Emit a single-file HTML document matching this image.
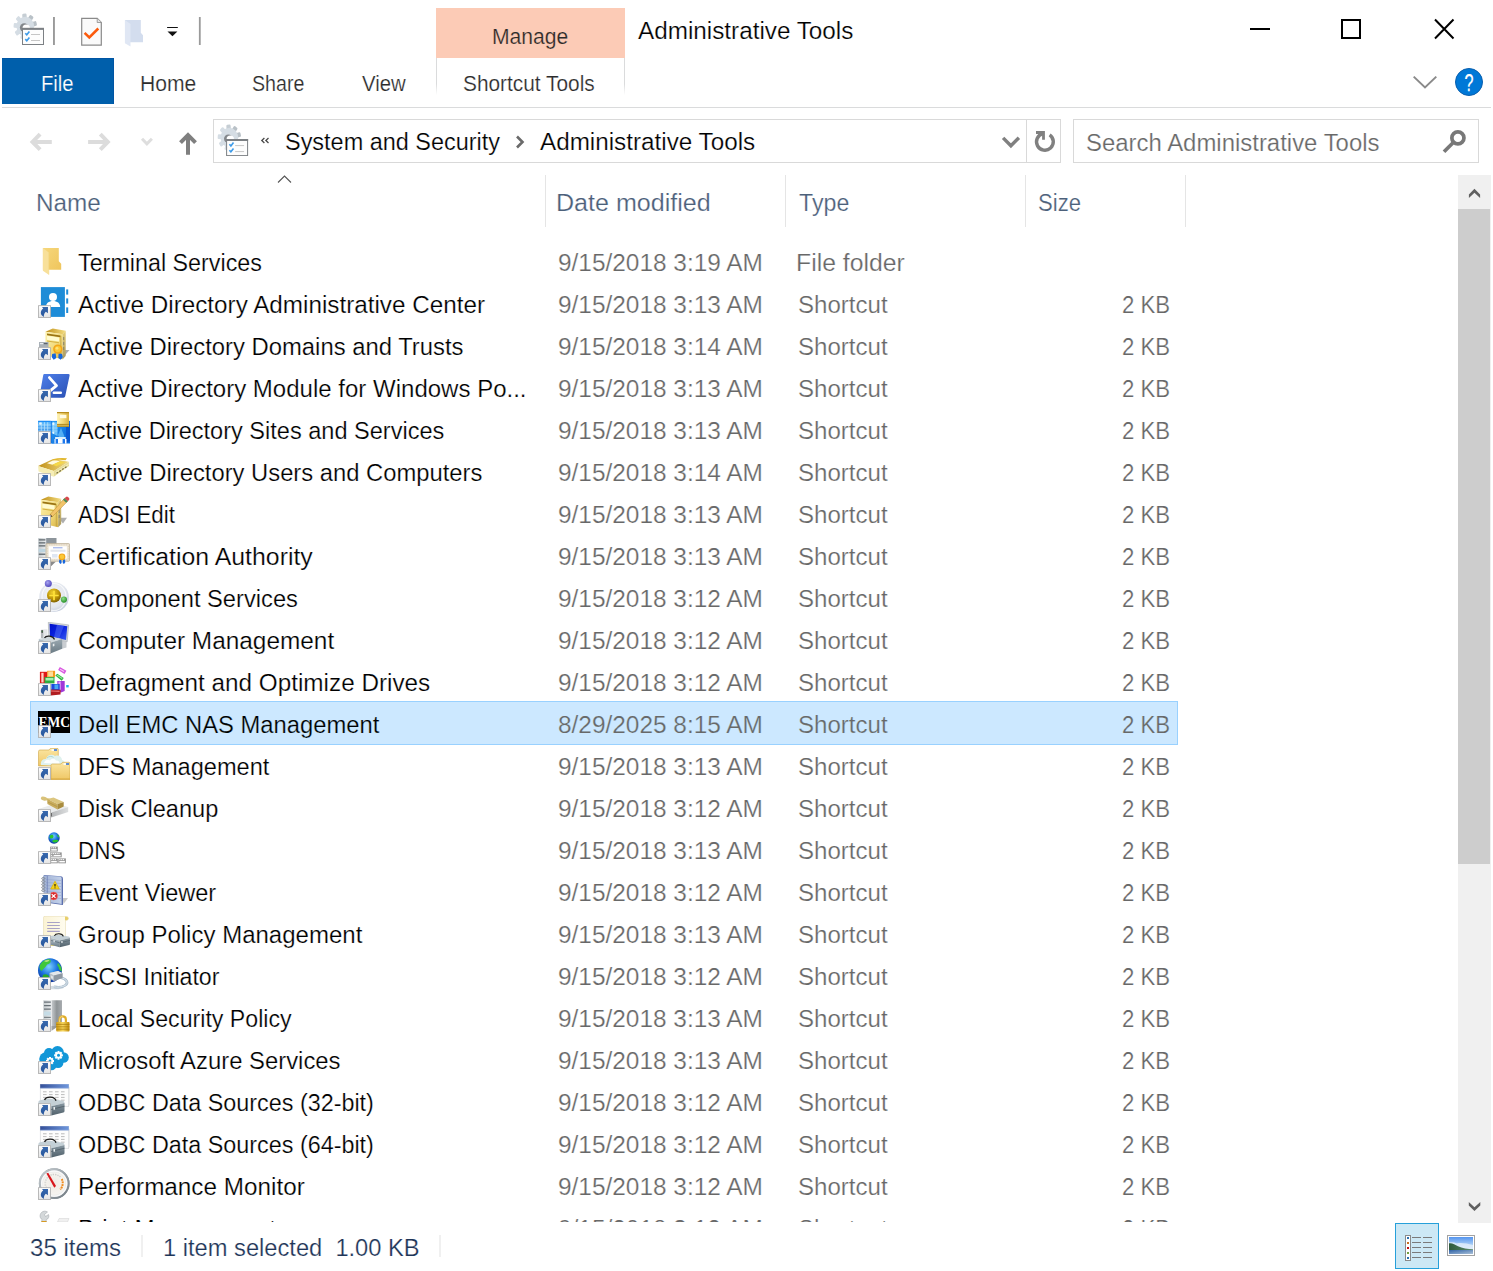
<!DOCTYPE html>
<html><head><meta charset="utf-8"><title>Administrative Tools</title>
<style>
html,body{margin:0;padding:0;background:#fff;}
body{width:1493px;height:1271px;overflow:hidden;font-family:"Liberation Sans",sans-serif;}
#win{position:relative;width:1493px;height:1271px;overflow:hidden;background:#fff;}
.a{position:absolute;}
.t{-webkit-text-stroke:0.22px #fff;position:absolute;line-height:30px;white-space:pre;transform-origin:0 0;display:inline-block;}
#list{position:absolute;left:0;top:229px;width:1458px;height:993px;overflow:hidden;}
#list .t,#list .ic,#list .sel{margin-top:-229px;}
.ic{position:absolute;left:38px;width:32px;height:32px;}
.ic svg{position:absolute;left:0;top:0;}
.sel{position:absolute;left:30px;width:1146px;height:42px;background:#cce8ff;border:1px solid #99d1ff;}

</style></head>
<body>
<div id="win">
<svg width="0" height="0" style="position:absolute"><defs>
<linearGradient id="gOv" x1="0" y1="0" x2="0" y2="1"><stop offset="0" stop-color="#fff"/><stop offset="1" stop-color="#e4e4e4"/></linearGradient>
<linearGradient id="gArr" x1="0" y1="0" x2="0" y2="1"><stop offset="0" stop-color="#3768ad"/><stop offset="1" stop-color="#27569c"/></linearGradient>
<linearGradient id="gFoB" x1="0" y1="0" x2="1" y2="1"><stop offset="0" stop-color="#f6d77c"/><stop offset="1" stop-color="#efc55c"/></linearGradient>
<linearGradient id="gGoldF" x1="0" y1="0" x2="1" y2="1"><stop offset="0" stop-color="#fdf2b0"/><stop offset="0.6" stop-color="#f0d878"/><stop offset="1" stop-color="#d8b548"/></linearGradient>
<linearGradient id="gGoldT" x1="0" y1="0" x2="1" y2="0"><stop offset="0" stop-color="#c09018"/><stop offset="1" stop-color="#f3dc80"/></linearGradient>
<linearGradient id="gGoldS" x1="0" y1="0" x2="0" y2="1"><stop offset="0" stop-color="#e8d078"/><stop offset="1" stop-color="#a89860"/></linearGradient>
<linearGradient id="gPS" x1="0" y1="0" x2="1" y2="1"><stop offset="0" stop-color="#4f80ea"/><stop offset="1" stop-color="#2a50b4"/></linearGradient>
<linearGradient id="gBlueB" x1="0" y1="0" x2="0" y2="1"><stop offset="0" stop-color="#6cc4ff"/><stop offset="1" stop-color="#0a62d0"/></linearGradient>
<linearGradient id="gBlueB2" x1="0" y1="0" x2="1" y2="1"><stop offset="0" stop-color="#2a9cf4"/><stop offset="1" stop-color="#0868d8"/></linearGradient>
<radialGradient id="gSph" cx="0.45" cy="0.4" r="0.6"><stop offset="0" stop-color="#f8f9fc"/><stop offset="0.75" stop-color="#e2e6ee"/><stop offset="1" stop-color="#c6cede"/></radialGradient>
<radialGradient id="gGoldBall" cx="0.4" cy="0.3" r="0.75"><stop offset="0" stop-color="#f0d030"/><stop offset="0.6" stop-color="#b89008"/><stop offset="1" stop-color="#7a5c00"/></radialGradient>
<radialGradient id="gPurp" cx="0.4" cy="0.35" r="0.7"><stop offset="0" stop-color="#a8a4f0"/><stop offset="1" stop-color="#4a40b8"/></radialGradient>
<radialGradient id="gGreen" cx="0.4" cy="0.35" r="0.7"><stop offset="0" stop-color="#8fe08a"/><stop offset="1" stop-color="#1f8a20"/></radialGradient>
<linearGradient id="gScreen" x1="0" y1="0" x2="1" y2="1"><stop offset="0" stop-color="#0010c8"/><stop offset="0.5" stop-color="#0a22e0"/><stop offset="1" stop-color="#3a5cf0"/></linearGradient>
<linearGradient id="gSteel" x1="0" y1="0" x2="0" y2="1"><stop offset="0" stop-color="#b8c6ce"/><stop offset="1" stop-color="#6c7c86"/></linearGradient>
<linearGradient id="gSteelD" x1="0" y1="0" x2="0" y2="1"><stop offset="0" stop-color="#8898a2"/><stop offset="1" stop-color="#50606a"/></linearGradient>
<linearGradient id="gSrvS" x1="0" y1="0" x2="1" y2="0"><stop offset="0" stop-color="#c8cccf"/><stop offset="0.5" stop-color="#8f9497"/><stop offset="1" stop-color="#a8acaf"/></linearGradient>
<linearGradient id="gSrvF" x1="0" y1="0" x2="1" y2="0"><stop offset="0" stop-color="#c4cacd"/><stop offset="1" stop-color="#e9ecee"/></linearGradient>
<linearGradient id="gLock" x1="0" y1="0" x2="1" y2="0"><stop offset="0" stop-color="#d09a10"/><stop offset="0.5" stop-color="#f8d860"/><stop offset="1" stop-color="#c08a08"/></linearGradient>
<linearGradient id="gTabH" x1="0" y1="0" x2="1" y2="0"><stop offset="0" stop-color="#34509a"/><stop offset="1" stop-color="#6f97dc"/></linearGradient>
<radialGradient id="gGlobe" cx="0.45" cy="0.35" r="0.7"><stop offset="0" stop-color="#7fd4ff"/><stop offset="0.5" stop-color="#1c74e0"/><stop offset="1" stop-color="#0a2a90"/></radialGradient>
<radialGradient id="gGauge" cx="0.5" cy="0.5" r="0.5"><stop offset="0" stop-color="#efe9e2"/><stop offset="0.7" stop-color="#f6f4f0"/><stop offset="0.86" stop-color="#d9dcde"/><stop offset="1" stop-color="#8f979c"/></radialGradient>
<linearGradient id="gNote" x1="0" y1="0" x2="1" y2="0"><stop offset="0" stop-color="#9fb1d4"/><stop offset="1" stop-color="#c4d2ea"/></linearGradient>
<linearGradient id="gScroll" x1="0" y1="0" x2="1" y2="0"><stop offset="0" stop-color="#fbf3d4"/><stop offset="1" stop-color="#fffdf2"/></linearGradient>
<linearGradient id="gDrive" x1="0" y1="0" x2="1" y2="0"><stop offset="0" stop-color="#b4b6b8"/><stop offset="1" stop-color="#dcdedf"/></linearGradient>
<linearGradient id="gFold2" x1="0" y1="0" x2="0" y2="1"><stop offset="0" stop-color="#fbe6a2"/><stop offset="1" stop-color="#efc766"/></linearGradient>
<linearGradient id="gRim" x1="0" y1="0" x2="1" y2="1"><stop offset="0" stop-color="#c9cfd3"/><stop offset="0.5" stop-color="#9aa3a9"/><stop offset="1" stop-color="#727b82"/></linearGradient>
<linearGradient id="gGoldBox" x1="0" y1="0" x2="1" y2="0"><stop offset="0" stop-color="#fff4b8"/><stop offset="0.5" stop-color="#f2d878"/><stop offset="1" stop-color="#d8b040"/></linearGradient>
<linearGradient id="gSteelM" x1="0" y1="0" x2="0" y2="1"><stop offset="0" stop-color="#9aa8b0"/><stop offset="1" stop-color="#6c7c86"/></linearGradient>
</defs></svg>
<!-- title bar -->
<div class="a" id="qat" style="left:0;top:0;width:430px;height:58px"><svg width="430" height="58" viewBox="0 0 430 58"><g transform="translate(14,14)"><g transform="translate(11.300,12.500) scale(0.900,1) translate(-10.500,-12.500)"><rect x="8.100" y="-0.500" width="4.800" height="8" rx="1.200" fill="#c6ced4" transform="rotate(-5 10.500 12.500)"/><rect x="8.100" y="-0.500" width="4.800" height="8" rx="1.200" fill="#b9c1c7" transform="rotate(35 10.500 12.500)"/><rect x="8.100" y="-0.500" width="4.800" height="8" rx="1.200" fill="#b9c1c7" transform="rotate(75 10.500 12.500)"/><rect x="8.100" y="-0.500" width="4.800" height="8" rx="1.200" fill="#d5dde4" transform="rotate(115 10.500 12.500)"/><rect x="8.100" y="-0.500" width="4.800" height="8" rx="1.200" fill="#d5dde4" transform="rotate(155 10.500 12.500)"/><rect x="8.100" y="-0.500" width="4.800" height="8" rx="1.200" fill="#d5dde4" transform="rotate(195 10.500 12.500)"/><rect x="8.100" y="-0.500" width="4.800" height="8" rx="1.200" fill="#d5dde4" transform="rotate(235 10.500 12.500)"/><rect x="8.100" y="-0.500" width="4.800" height="8" rx="1.200" fill="#d5dde4" transform="rotate(275 10.500 12.500)"/><rect x="8.100" y="-0.500" width="4.800" height="8" rx="1.200" fill="#d5dde4" transform="rotate(315 10.500 12.500)"/><circle cx="10.500" cy="12.500" r="9.800" fill="#d5dde4"/></g><circle cx="10.200" cy="13.600" r="4.300" fill="#83878b"/><circle cx="12.200" cy="14.200" r="3.700" fill="#fff"/><rect x="8.500" y="14.400" width="21" height="16.100" fill="#fdfdfd" stroke="#7c8084" stroke-width="1"/><rect x="8" y="13.900" width="22" height="2" fill="#7c8084"/><path d="M11.300 19.200l1.500 1.600l2.600-3.300M11.300 25.100l1.500 1.600l2.600-3.300" stroke="#3d9be9" stroke-width="1.600" fill="none"/><path d="M17 20.500H26M17 26.500H26" stroke="#c6c6c6" stroke-width="1"/></g><rect x="53" y="17" width="1.900" height="28" fill="#9a9a9a"/><path d="M81.700 18.400H97.200L101.300 22.500V45.200H81.700Z" fill="#fafafa" stroke="#8a8a8a" stroke-width="1.200"/><path d="M97.200 18.400V22.500H101.300" fill="#e6e6e6" stroke="#8a8a8a" stroke-width="0.800"/><path d="M84.600 32.800L89.300 37.500L98.300 28.500" stroke="#fb5a0c" stroke-width="2.500" fill="none"/><path d="M125 20H140.800V32.800L143 35.200V42.200H125Z" fill="#d3ddee"/><path d="M124.900 20L130.500 23.900V46.400L124.900 43.200Z" fill="#e0e7f4"/><rect x="167.100" y="27" width="10.700" height="1" fill="#111"/><path d="M167.500 31.400H177.400L172.450 36.200Z" fill="#111"/><rect x="198.900" y="17" width="1.800" height="28" fill="#9a9a9a"/></svg></div>
<div class="a" style="left:436px;top:8px;width:189px;height:50px;background:#fccbb6"></div>
<!-- window controls -->
<svg class="a" style="left:1240px;top:0" width="253" height="58" viewBox="0 0 253 58">
 <path d="M10 29H30" stroke="#000" stroke-width="2" fill="none"/>
 <rect x="102" y="20" width="18" height="18" stroke="#000" stroke-width="2" fill="none"/>
 <path d="M195 19.5L213.5 38.5M213.5 19.5L195 38.5" stroke="#000" stroke-width="2" fill="none"/>
</svg>
<!-- ribbon tabs -->
<div class="a" style="left:2px;top:58px;width:111px;height:45px;background:#005fab;border-top:1px solid #0055a4;border-right:1px solid #0055a4"></div>
<div class="a" style="left:436px;top:58px;width:1px;height:37px;background:linear-gradient(#dadbdc 70%,#fff)"></div>
<div class="a" style="left:624px;top:58px;width:1px;height:37px;background:linear-gradient(#dadbdc 70%,#fff)"></div>
<div class="a" style="left:2px;top:107px;width:1489px;height:1px;background:#dadbdc"></div>
<svg class="a" style="left:1408px;top:64px" width="80" height="36" viewBox="0 0 80 36">
 <path d="M5.700 12.600L17 23.400L28.300 12.600" stroke="#8a8a8a" stroke-width="2" fill="none"/>
 <defs><linearGradient id="hg" x1="0" y1="0" x2="0" y2="1"><stop offset="0" stop-color="#1683e0"/><stop offset="1" stop-color="#0567c8"/></linearGradient></defs>
 <circle cx="61" cy="18" r="13.500" fill="#0078d7" stroke="#0a5fae" stroke-width="1"/>
 <text x="61" y="26.600" font-family="Liberation Sans, sans-serif" font-size="23" fill="#fff" stroke="#fff" stroke-width="0.250" text-anchor="middle" textLength="9" lengthAdjust="spacingAndGlyphs">?</text>
</svg>
<!-- nav bar -->
<svg class="a" style="left:20px;top:120px" width="190" height="44" viewBox="0 0 190 44">
 <g stroke="#dcdcdc" stroke-width="4" fill="none">
  <path d="M31.800 21.900H13.500M20.100 14.200L12.500 21.900L20.100 29.600"/>
  <path d="M68.100 21.900H86.800M80.300 14.200L87.800 21.900L80.300 29.600"/>
 </g>
 <path d="M122 18.800L126.900 23.800L131.900 18.800" stroke="#dedede" stroke-width="3" fill="none"/>
 <path d="M168 34.700V16M160.500 22.700L168 15.200L175.500 22.700" stroke="#7f7f7f" stroke-width="4" fill="none"/>
</svg>
<div class="a" style="left:213px;top:119px;width:846px;height:42px;border:1px solid #d9d9d9"></div>
<div class="a" style="left:1026px;top:120px;width:1px;height:42px;background:#d9d9d9"></div>
<svg class="a" style="left:996px;top:126px" width="64" height="32" viewBox="0 0 64 32">
 <path d="M7.100 11.900L14.900 19.800L22.900 11.800" stroke="#808080" stroke-width="3.400" fill="none"/>
 <path d="M53.620 8.850A8.400 8.400 0 1 1 46.730 7.690" stroke="#808080" stroke-width="3.400" fill="none"/>
 <path d="M40 5H48.900V13.700H46.100V7.900H40Z" fill="#808080"/>
</svg>
<div class="a" style="left:1073px;top:119px;width:404px;height:42px;border:1px solid #d9d9d9"></div>
<svg class="a" style="left:1440px;top:128px" width="30" height="28" viewBox="0 0 30 28">
 <circle cx="17.900" cy="9.900" r="6.050" stroke="#787878" stroke-width="3.700" fill="none"/>
 <path d="M13.800 14L4 23.700" stroke="#787878" stroke-width="3.700" fill="none"/>
</svg>
<div class="a" id="adricon" style="left:217px;top:124px;width:32px;height:32px"><svg width="32" height="32" viewBox="0 0 32 32"><g transform="translate(1.1,1.1)"><g transform="translate(11.300,12.500) scale(0.900,1) translate(-10.500,-12.500)"><rect x="8.100" y="-0.500" width="4.800" height="8" rx="1.200" fill="#c6ced4" transform="rotate(-5 10.500 12.500)"/><rect x="8.100" y="-0.500" width="4.800" height="8" rx="1.200" fill="#b9c1c7" transform="rotate(35 10.500 12.500)"/><rect x="8.100" y="-0.500" width="4.800" height="8" rx="1.200" fill="#b9c1c7" transform="rotate(75 10.500 12.500)"/><rect x="8.100" y="-0.500" width="4.800" height="8" rx="1.200" fill="#d5dde4" transform="rotate(115 10.500 12.500)"/><rect x="8.100" y="-0.500" width="4.800" height="8" rx="1.200" fill="#d5dde4" transform="rotate(155 10.500 12.500)"/><rect x="8.100" y="-0.500" width="4.800" height="8" rx="1.200" fill="#d5dde4" transform="rotate(195 10.500 12.500)"/><rect x="8.100" y="-0.500" width="4.800" height="8" rx="1.200" fill="#d5dde4" transform="rotate(235 10.500 12.500)"/><rect x="8.100" y="-0.500" width="4.800" height="8" rx="1.200" fill="#d5dde4" transform="rotate(275 10.500 12.500)"/><rect x="8.100" y="-0.500" width="4.800" height="8" rx="1.200" fill="#d5dde4" transform="rotate(315 10.500 12.500)"/><circle cx="10.500" cy="12.500" r="9.800" fill="#d5dde4"/></g><circle cx="10.200" cy="13.600" r="4.300" fill="#83878b"/><circle cx="12.200" cy="14.200" r="3.700" fill="#fff"/><rect x="8.500" y="14.400" width="21" height="16.100" fill="#fdfdfd" stroke="#7c8084" stroke-width="1"/><rect x="8" y="13.900" width="22" height="2" fill="#7c8084"/><path d="M11.300 19.200l1.500 1.600l2.600-3.300M11.300 25.100l1.500 1.600l2.600-3.300" stroke="#3d9be9" stroke-width="1.600" fill="none"/><path d="M17 20.500H26M17 26.500H26" stroke="#c6c6c6" stroke-width="1"/></g></svg></div>
<svg class="a" style="left:258px;top:134px" width="14" height="12" viewBox="0 0 14 12"><path d="M6.400 4.100L3.800 6.500L6.400 8.900M10.500 4.100L7.900 6.500L10.500 8.900" stroke="#4a4a4a" stroke-width="1.300" fill="none"/></svg>
<svg class="a" style="left:510px;top:132px" width="20" height="20" viewBox="0 0 20 20"><path d="M7 4.5L12.5 10L7 15.5" stroke="#6a6a6a" stroke-width="2.6" fill="none"/></svg>
<!-- column header -->
<svg class="a" style="left:276px;top:174px" width="18" height="10" viewBox="0 0 18 10"><path d="M2 8.5L8.5 2L15 8.5" stroke="#555" stroke-width="1.1" fill="none"/></svg>
<div class="a" style="left:545px;top:175px;width:1px;height:52px;background:#e5e5e5"></div>
<div class="a" style="left:785px;top:175px;width:1px;height:52px;background:#e5e5e5"></div>
<div class="a" style="left:1025px;top:175px;width:1px;height:52px;background:#e5e5e5"></div>
<div class="a" style="left:1185px;top:175px;width:1px;height:52px;background:#e5e5e5"></div>
<!-- list -->
<div id="list">
<div class="ic" style="top:244px"><svg width="32" height="32" viewBox="0 0 32 32"><path d="M4.900 4H20.800V17.300L23.200 19.700V25.800H4.900Z" fill="url(#gFoB)"/><path d="M4.900 4L10.800 8.400V30.700L4.900 26.700Z" fill="#f8e09a"/><path d="M10.800 8.400V30.700" stroke="#f3d684" stroke-width="0.6"/></svg></div>
<div class="ic" style="top:286px"><svg width="32" height="32" viewBox="0 0 32 32"><rect x="2.900" y="1.100" width="24" height="29.800" fill="#1e8cd7"/><circle cx="15" cy="11" r="4" fill="#fff"/><path d="M7.900 21C7.900 17.200 10.800 15 15 15S22.200 17.200 22.200 21Z" fill="#fff"/><rect x="28.200" y="3.400" width="2" height="5.200" fill="#1e8cd7"/><rect x="28.200" y="12.400" width="2" height="5.200" fill="#1e8cd7"/><rect x="28.200" y="21.400" width="2" height="5.600" fill="#1e8cd7"/></svg><svg width="32" height="32" viewBox="0 0 32 32"><rect x="0.55" y="19.65" width="11.9" height="11.9" fill="url(#gOv)" stroke="#b2b2b2" stroke-width="0.9"/><path d="M4 21.100L10 21L9.900 27.200L7.900 25.800C6.800 26.600 5.900 28.200 5.700 31C4.200 29.800 2.900 28.600 2.800 27C2.900 25 3.800 23.600 5.200 22.600Z" fill="url(#gArr)"/></svg></div>
<div class="ic" style="top:328px"><svg width="32" height="32" viewBox="0 0 32 32"><g transform="translate(0,0)"><path d="M24.700 22H31.500L25 29.500Z" fill="#9a9a9a" opacity="0.8"/><path d="M7.400 3.700L14.800 0.500L27.700 2.700L24.700 6.200Z" fill="url(#gGoldT)"/><path d="M7.400 3.700L24.700 6.200V31.200L7.400 27.300Z" fill="url(#gGoldF)"/><path d="M24.700 6.200L27.700 2.700V28L24.700 31.200Z" fill="url(#gGoldS)"/><path d="M9 5.600L22.500 7.600V9.200L9 7.200Z" fill="#9a7414"/><path d="M9 7.800L21 9.500V13.500L9 11.800Z" fill="#fffbd0"/><path d="M9 12.600L21 14.300V15.300L9 13.600Z" fill="#d4b040"/><path d="M22.800 8V30.500" stroke="#b89a3c" stroke-width="0.7"/><path d="M25.700 9v3M25.700 14v3M25.700 19v3" stroke="#7a7a6a" stroke-width="0.8"/></g><rect x="1" y="14" width="9.500" height="6" fill="#a9b1b8"/><rect x="2" y="15" width="3" height="1.200" fill="#e8ecef"/><rect x="6" y="15" width="3.500" height="1.200" fill="#5c646c"/><path d="M14.200 26L17.600 25.300L18.300 30L15.700 31.800L13.800 29.300Z" fill="#1766dc"/><path d="M20.600 25.300L24 26L24.800 29.300L22.700 31.800L20.300 30Z" fill="#1766dc"/><circle cx="19.800" cy="21.100" r="4.700" fill="#f3a61a"/><circle cx="19.800" cy="21.100" r="3.100" fill="#fbc938"/><circle cx="19" cy="20.300" r="1.400" fill="#ffe27a"/></svg><svg width="32" height="32" viewBox="0 0 32 32"><rect x="0.55" y="19.65" width="11.9" height="11.9" fill="url(#gOv)" stroke="#b2b2b2" stroke-width="0.9"/><path d="M4 21.100L10 21L9.900 27.200L7.900 25.800C6.800 26.600 5.900 28.200 5.700 31C4.200 29.800 2.900 28.600 2.800 27C2.900 25 3.800 23.600 5.200 22.600Z" fill="url(#gArr)"/></svg></div>
<div class="ic" style="top:370px"><svg width="32" height="32" viewBox="0 0 32 32"><path d="M6.200 4.100H30.500Q32 4.100 31.600 5.600L27.200 26.300Q26.900 27.700 25.400 27.700H2.600Q1.100 27.700 1.500 26.200L5.200 5.300Q5.500 4.100 6.200 4.100Z" fill="url(#gPS)"/><path d="M11.400 7.600L18.500 15.700L9 23.400" stroke="#fff" stroke-width="2.800" fill="none" stroke-linecap="round" stroke-linejoin="round"/><path d="M15.800 22.800H22.800" stroke="#fff" stroke-width="2.500" stroke-linecap="round"/></svg><svg width="32" height="32" viewBox="0 0 32 32"><rect x="0.55" y="19.65" width="11.9" height="11.9" fill="url(#gOv)" stroke="#b2b2b2" stroke-width="0.9"/><path d="M4 21.100L10 21L9.900 27.200L7.900 25.800C6.800 26.600 5.900 28.200 5.700 31C4.200 29.800 2.900 28.600 2.800 27C2.900 25 3.800 23.600 5.200 22.600Z" fill="url(#gArr)"/></svg></div>
<div class="ic" style="top:412px"><svg width="32" height="32" viewBox="0 0 32 32"><rect x="0.100" y="8.900" width="32" height="22.600" fill="#0f74e6"/><rect x="0.100" y="8.900" width="12.700" height="22.600" fill="url(#gBlueB)"/><rect x="0.100" y="8.900" width="12.700" height="1.300" fill="#1c8cf4"/><path d="M0.100 13H12.800M0.100 16H12.800M0.100 19H12.800M3.300 10.200V22M6.500 10.200V22M9.700 10.200V22" stroke="#d4f2ff" stroke-width="0.800" opacity="0.750"/><circle cx="2.300" cy="11.500" r="1.300" fill="#fff" opacity="0.800"/><path d="M13.800 8.900H28V29.500L24 31.500H13.800Z" fill="url(#gBlueB2)"/><path d="M13.800 10.200H19.500V24L13.800 21Z" fill="#7fd0ff" opacity="0.800"/><path d="M15.600 10.200V22M13.800 13H19.500M13.800 16H19.500M13.800 19H19.500" stroke="#d4f2ff" stroke-width="0.700" opacity="0.600"/><circle cx="15.400" cy="11.700" r="1.200" fill="#fff" opacity="0.800"/><circle cx="15.300" cy="20.800" r="1.100" fill="#fff" opacity="0.700"/><path d="M20 23L23 16L26.500 24.500L22 27Z" fill="#6ec4fb" opacity="0.700"/><path d="M28 12H32V29L28 31Z" fill="#0a58d0"/><path d="M16.500 27H28.500V31.600H16.500Z" fill="#fff"/><path d="M17.100 25H27.700V27H17.100Z" fill="#d8f0ff"/><path d="M17.600 27H20V31.500H17.600ZM24.600 27H27V31.500H24.600Z" fill="#1c78ee"/><rect x="19" y="0" width="12" height="14.800" fill="url(#gGoldBox)"/><rect x="19" y="0" width="12" height="1.300" fill="#b88c1c"/><rect x="19" y="11.900" width="12" height="2.900" fill="#b08a1c"/><rect x="19" y="12.900" width="12" height="0.700" fill="#e8cc6a"/><rect x="21.800" y="2.900" width="6.600" height="3.300" fill="#fffbe4"/></svg><svg width="32" height="32" viewBox="0 0 32 32"><rect x="0.55" y="19.65" width="11.9" height="11.9" fill="url(#gOv)" stroke="#b2b2b2" stroke-width="0.9"/><path d="M4 21.100L10 21L9.900 27.200L7.900 25.800C6.800 26.600 5.900 28.200 5.700 31C4.200 29.800 2.900 28.600 2.800 27C2.900 25 3.800 23.600 5.200 22.600Z" fill="url(#gArr)"/></svg></div>
<div class="ic" style="top:454px"><svg width="32" height="32" viewBox="0 0 32 32"><path d="M0.100 12.100L15.100 4.900L30.700 7.800L15.800 17.100Z" fill="url(#gGoldT)"/><path d="M9 9.300L16 6L22 7.200L14.500 10.800Z" fill="#fffbe0"/><path d="M14.500 10.800L22 7.200L26.500 8.200L18.500 12.300Z" fill="#f4d848"/><path d="M14.500 5.200Q22 3.300 29 4.300L27.500 6.200Q21 5.200 15.500 6.400Z" fill="#e2b830"/><path d="M0.100 12.100L15.800 17.100V22.700L0.600 17.400Z" fill="#f6eeb4"/><path d="M15.800 17.100L30.700 7.800L31 12.100L15.800 22.700Z" fill="#e6dc98"/><path d="M17.500 18.500L30.500 10.300" stroke="#fff8d0" stroke-width="0.700"/><path d="M18.500 19.200l1.600-1M21.300 17.400l1.600-1M24.100 15.600l1.600-1M26.900 13.800l1.600-1" stroke="#6f673c" stroke-width="1.200"/></svg><svg width="32" height="32" viewBox="0 0 32 32"><rect x="0.55" y="19.65" width="11.9" height="11.9" fill="url(#gOv)" stroke="#b2b2b2" stroke-width="0.9"/><path d="M4 21.100L10 21L9.900 27.200L7.900 25.800C6.800 26.600 5.900 28.200 5.700 31C4.200 29.800 2.900 28.600 2.800 27C2.900 25 3.800 23.600 5.200 22.600Z" fill="url(#gArr)"/></svg></div>
<div class="ic" style="top:496px"><svg width="32" height="32" viewBox="0 0 32 32"><g transform="translate(-4.5,0)"><path d="M24.700 21.800H33.500L29.500 27.500Z" fill="#9a9a9a" opacity="0.8"/><path d="M7.400 3.700L14.800 0.500L27.700 2.700L24.700 6.200Z" fill="url(#gGoldT)"/><path d="M7.400 3.700L24.700 6.200V31.200L7.400 27.300Z" fill="url(#gGoldF)"/><path d="M24.700 6.200L27.700 2.700V28L24.700 31.200Z" fill="url(#gGoldS)"/><path d="M9 5.600L22.500 7.600V9.200L9 7.200Z" fill="#9a7414"/><path d="M9 7.800L21 9.500V13.500L9 11.800Z" fill="#fffbd0"/><path d="M9 12.600L21 14.300V15.300L9 13.600Z" fill="#d4b040"/><path d="M22.800 8V30.500" stroke="#b89a3c" stroke-width="0.7"/><path d="M25.700 9v3M25.700 14v3M25.700 19v3" stroke="#7a7a6a" stroke-width="0.8"/></g><path d="M26.500 2.300L29.700 5.200L14.500 20.500L12 21L12.300 18.300Z" fill="#f2c46a" stroke="#b98a30" stroke-width="0.5"/><path d="M12 21L12.300 18.300L14.500 20.500Z" fill="#3a3024"/><path d="M26.500 2.300L28 0.900Q29 0.200 30 1.100L31 2.100Q31.800 3 31 3.900L29.700 5.200Z" fill="#d8484c"/><path d="M25 3.800L26.500 2.300L29.700 5.200L28.200 6.700Z" fill="#4a8a5a"/></svg><svg width="32" height="32" viewBox="0 0 32 32"><rect x="0.55" y="19.65" width="11.9" height="11.9" fill="url(#gOv)" stroke="#b2b2b2" stroke-width="0.9"/><path d="M4 21.100L10 21L9.900 27.200L7.900 25.800C6.800 26.600 5.900 28.200 5.700 31C4.200 29.800 2.900 28.600 2.800 27C2.900 25 3.800 23.600 5.200 22.600Z" fill="url(#gArr)"/></svg></div>
<div class="ic" style="top:538px"><svg width="32" height="32" viewBox="0 0 32 32"><path d="M8 0H18.500V8H8Z" fill="#8d959b"/><rect x="0.200" y="0" width="8" height="19.500" fill="url(#gSrvF)"/><path d="M0.800 1.200H7.400V2.600H0.800ZM0.800 4.200H7.400V5.600H0.800ZM0.800 7.200H7.400V8.600H0.800Z" fill="#5f676d"/><path d="M0.800 11H7.400V14H0.800Z" fill="#bcd4e0"/><path d="M0.800 15.500H7.400V17H0.800Z" fill="#6f777d"/><path d="M12.500 23.500H18L12.800 28.500Z" fill="#8a8a8a"/><rect x="8" y="5.600" width="23.600" height="17.600" rx="1" fill="#f1e9da" stroke="#b9ab92" stroke-width="0.8"/><rect x="9.300" y="6.900" width="21" height="15" fill="none" stroke="#c9bca4" stroke-width="0.6" stroke-dasharray="1 0.700"/><rect x="10.800" y="8.300" width="18" height="12.200" fill="#fff"/><path d="M15 9.800H24.500" stroke="#5a78d8" stroke-width="0.700"/><path d="M12.500 12.200H27.500M12.500 13.200H27.500" stroke="#c8ccd8" stroke-width="0.600"/><rect x="14" y="16" width="5.500" height="3.600" fill="#dfe6f2"/><path d="M21.300 21.500L23.300 21L23.600 25L22.300 26L21 24.300Z" fill="#1766dc"/><path d="M25 21L27 21.500L27.300 24.300L26 26L24.700 25Z" fill="#1766dc"/><circle cx="24" cy="18.800" r="3.400" fill="#f3a61a"/><circle cx="24" cy="18.800" r="2.200" fill="#fbc938"/></svg><svg width="32" height="32" viewBox="0 0 32 32"><rect x="0.55" y="19.65" width="11.9" height="11.9" fill="url(#gOv)" stroke="#b2b2b2" stroke-width="0.9"/><path d="M4 21.100L10 21L9.900 27.200L7.900 25.800C6.800 26.600 5.900 28.200 5.700 31C4.200 29.800 2.900 28.600 2.800 27C2.900 25 3.800 23.600 5.200 22.600Z" fill="url(#gArr)"/></svg></div>
<div class="ic" style="top:580px"><svg width="32" height="32" viewBox="0 0 32 32"><circle cx="16" cy="17" r="14.800" fill="url(#gSph)"/><ellipse cx="16" cy="17" rx="12" ry="13.500" fill="none" stroke="#fff" stroke-width="1.200" opacity="0.7"/><circle cx="16" cy="15.500" r="7" fill="url(#gGoldBall)"/><path d="M11.300 15.500H20.700M16 10.800V20.200" stroke="#ffe23a" stroke-width="1.700"/><circle cx="10.300" cy="3.600" r="3.500" fill="url(#gPurp)"/><circle cx="25.900" cy="19.600" r="3.100" fill="url(#gGreen)"/></svg><svg width="32" height="32" viewBox="0 0 32 32"><rect x="0.55" y="19.65" width="11.9" height="11.9" fill="url(#gOv)" stroke="#b2b2b2" stroke-width="0.9"/><path d="M4 21.100L10 21L9.900 27.200L7.900 25.800C6.800 26.600 5.900 28.200 5.700 31C4.200 29.800 2.900 28.600 2.800 27C2.900 25 3.800 23.600 5.200 22.600Z" fill="url(#gArr)"/></svg></div>
<div class="ic" style="top:622px"><svg width="32" height="32" viewBox="0 0 32 32"><path d="M5.200 7.300H9.500V16H5.200Z" fill="#e4e6e8"/><path d="M2.900 8.600Q2.900 7.800 3.700 7.800H4.600Q5.400 7.800 5.400 8.600V16H2.900Z" fill="#b4b8bc"/><rect x="3.500" y="8.300" width="1.300" height="2.500" fill="#2a2e2a"/><rect x="3.800" y="8.800" width="0.700" height="1.200" fill="#3d9a3d"/><path d="M22 18.500L28.500 19.800V25.500L23 27Z" fill="#c9cdd1"/><path d="M10.300 0.200L30.700 2.900L29.200 19.800L10.800 15.800Z" fill="#d3d7db" stroke="#9aa0a6" stroke-width="0.500"/><path d="M11.600 1.800L29.300 4.200L28 17.900L12 14.400Z" fill="url(#gScreen)"/><path d="M19 2.800L26 3.800L21 16.400L16 15.300Z" fill="#5f7df8" opacity="0.450"/><path d="M0.800 17L11.500 14.300L24.200 17L13 20.600Z" fill="#cfd7db"/><path d="M0.800 17L13 20.600V31.200L0.800 27Z" fill="url(#gSteel)"/><path d="M13 20.600L24.200 17V26.800L13 31.200Z" fill="url(#gSteelM)"/><path d="M6.500 16C8 13 15 13.500 16.500 17.500" stroke="#1c1c1c" stroke-width="1.200" fill="none"/><rect x="14.800" y="21.800" width="1.600" height="2.600" fill="#e8ecee" transform="skewY(-18) translate(0,5)"/></svg><svg width="32" height="32" viewBox="0 0 32 32"><rect x="0.55" y="19.65" width="11.9" height="11.9" fill="url(#gOv)" stroke="#b2b2b2" stroke-width="0.9"/><path d="M4 21.100L10 21L9.900 27.200L7.900 25.800C6.800 26.600 5.900 28.200 5.700 31C4.200 29.800 2.900 28.600 2.800 27C2.900 25 3.800 23.600 5.200 22.600Z" fill="url(#gArr)"/></svg></div>
<div class="ic" style="top:664px"><svg width="32" height="32" viewBox="0 0 32 32"><path d="M1.900 7.800H9.200V19H1.900Z" fill="#e01818"/><path d="M3.300 8.800H5.600V18.500H3.300Z" fill="#ffd0c4"/><path d="M9.200 6.800H17.100V13.400H9.200Z" fill="#f59a1a"/><path d="M10.200 7.400H15V12.500H10.200Z" fill="#ffe8b0" opacity="0.850"/><path d="M6.600 13.100H16.500V19.400H6.600Z" fill="#2fae40"/><path d="M7.600 14H15.500V16.500H7.600Z" fill="#a8f0b0"/><path d="M17.300 11.500L19.300 9.800L25.700 14L23.700 16.800Z" fill="#2cb03c"/><path d="M18.500 11.400L19.400 10.700L24.600 14.100L23.900 15Z" fill="#8fe89a"/><path d="M21.800 2.900L28.400 6.700L26.500 10L20.100 6.100Z" fill="#d858e0"/><path d="M22.300 4.800L26.300 7.100L25.800 8L21.800 5.700Z" fill="#f8c8f8"/><path d="M19.300 17H26.700V27L23 28.400L19.300 26.500Z" fill="#a038d8"/><path d="M20.500 17.500H22.700V26.500H20.500Z" fill="#e0a8f8"/><path d="M13.300 20H21.700V26H13.300Z" fill="#1a4ae0"/><path d="M16.500 20.500H20.300V25H16.500Z" fill="#48a8f0"/><path d="M12.300 25.400L22.700 25.800L22.500 30.400L13 31.400Z" fill="#b01c20"/><path d="M13 26.400L21.500 26.800V28L13 27.600Z" fill="#e87070"/><rect x="28.200" y="21" width="2.500" height="2.400" fill="#18b8e8"/></svg><svg width="32" height="32" viewBox="0 0 32 32"><rect x="0.55" y="19.65" width="11.9" height="11.9" fill="url(#gOv)" stroke="#b2b2b2" stroke-width="0.9"/><path d="M4 21.100L10 21L9.900 27.200L7.900 25.800C6.800 26.600 5.900 28.200 5.700 31C4.200 29.800 2.900 28.600 2.800 27C2.900 25 3.800 23.600 5.200 22.600Z" fill="url(#gArr)"/></svg></div>
<div class="sel" style="top:701px"></div>
<div class="ic" style="top:706px"><svg width="32" height="32" viewBox="0 0 32 32"><rect x="0" y="5" width="32" height="22" fill="#000"/><text x="16.200" y="20.600" font-family="Liberation Serif, serif" font-weight="bold" font-size="14.500" fill="#fff" text-anchor="middle" textLength="31.500" lengthAdjust="spacingAndGlyphs">EMC</text></svg><svg width="32" height="32" viewBox="0 0 32 32"><rect x="0.55" y="19.65" width="11.9" height="11.9" fill="url(#gOv)" stroke="#b2b2b2" stroke-width="0.9"/><path d="M4 21.100L10 21L9.900 27.200L7.900 25.800C6.800 26.600 5.900 28.200 5.700 31C4.200 29.800 2.900 28.600 2.800 27C2.900 25 3.800 23.600 5.200 22.600Z" fill="url(#gArr)"/></svg></div>
<div class="ic" style="top:748px"><svg width="32" height="32" viewBox="0 0 32 32"><path d="M0.500 3.500Q0.500 2 2 2H11L12.500 0.300H19Q20.300 0.300 20.300 1.600V18H0.500Z" fill="url(#gFold2)" stroke="#cfa544" stroke-width="0.600"/><rect x="16" y="1.200" width="3" height="1.600" fill="#3a78e0"/><rect x="13.500" y="1.200" width="2.500" height="1.600" fill="#fff"/><path d="M3 17C2 13 5 10.500 8 11C9 7 14 5.500 17 8C20 6.500 24 8.500 24 12C27 12.500 27.500 16 26 18Z" fill="#dff1ee"/><path d="M6 15C7 12 10 11 12 12.500C13 10 17 10 18 12.500C20 12 22 13.500 21.500 16Z" fill="#fff" opacity="0.900"/><path d="M9 10C11 8 14 8 15.500 9.500" stroke="#9fd0c8" stroke-width="0.800" fill="none"/><path d="M13 17.500Q13 16 14.500 16H23L24.500 14.300H30.800Q32 14.300 32 15.600V31.500H13Z" fill="url(#gFold2)" stroke="#cfa544" stroke-width="0.600"/><rect x="28" y="15.200" width="3" height="1.600" fill="#3a78e0"/><rect x="25.500" y="15.200" width="2.500" height="1.600" fill="#fff"/><path d="M13 30.500H32V31.500H13Z" fill="#d9a93c"/></svg><svg width="32" height="32" viewBox="0 0 32 32"><rect x="0.55" y="19.65" width="11.9" height="11.9" fill="url(#gOv)" stroke="#b2b2b2" stroke-width="0.9"/><path d="M4 21.100L10 21L9.900 27.200L7.900 25.800C6.800 26.600 5.900 28.200 5.700 31C4.200 29.800 2.900 28.600 2.800 27C2.900 25 3.800 23.600 5.200 22.600Z" fill="url(#gArr)"/></svg></div>
<div class="ic" style="top:790px"><svg width="32" height="32" viewBox="0 0 32 32"><path d="M0.400 19L17 13.800L30.200 17L13.300 22.600Z" fill="#e9ebec"/><path d="M0.400 19L13.300 22.600V27.400L0.400 23.600Z" fill="#c4c6c8"/><path d="M13.300 22.600L30.200 17V22L13.300 27.400Z" fill="url(#gDrive)"/><rect x="12.800" y="23" width="0.900" height="3.500" fill="#444"/><ellipse cx="6" cy="8.600" rx="3.200" ry="1.900" fill="#d9c27a" transform="rotate(12 6 8.600)"/><path d="M7 7.500L12.500 9L11.800 11.300L6.300 9.700Z" fill="#d9c27a"/><path d="M9.400 9L15.500 7.400L25.700 12L19.500 14Z" fill="#dcc680"/><path d="M9.400 9L19.500 14V19.500L9.400 14Z" fill="#c9ad5e"/><path d="M19.500 14L25.700 12V16.500L19.500 19.500Z" fill="#a98c3e"/><path d="M9.400 11.800L19.500 16.800" stroke="#a98c3e" stroke-width="0.600"/></svg><svg width="32" height="32" viewBox="0 0 32 32"><rect x="0.55" y="19.65" width="11.9" height="11.9" fill="url(#gOv)" stroke="#b2b2b2" stroke-width="0.9"/><path d="M4 21.100L10 21L9.900 27.200L7.900 25.800C6.800 26.600 5.900 28.200 5.700 31C4.200 29.800 2.900 28.600 2.800 27C2.900 25 3.800 23.600 5.200 22.600Z" fill="url(#gArr)"/></svg></div>
<div class="ic" style="top:832px"><svg width="32" height="32" viewBox="0 0 32 32"><circle cx="16" cy="6" r="5.700" fill="url(#gGlobe)"/><path d="M12 3.500C13.500 2 15.500 2.500 15.500 4.500C15.500 6.500 13 7 11.500 6Z" fill="#2cc82c"/><path d="M14 9C16 7.500 19.500 7.500 20.500 8.500C19.500 10.800 16 11.300 14 9Z" fill="#2cc82c"/><path d="M19 2.500C20.500 3 21.300 4.500 21.300 5.500C20 5.500 19 4 19 2.500Z" fill="#2cc82c"/><rect x="12.2" y="14.6" width="7.6" height="4.900" fill="#939393"/><rect x="13.2" y="15.299999999999999" width="1.2" height="1" fill="#fff"/><rect x="15.0" y="15.299999999999999" width="1.2" height="1" fill="#fff"/><rect x="16.8" y="15.299999999999999" width="1.2" height="1" fill="#fff"/><rect x="13.2" y="17.1" width="5.6" height="1.500" fill="#fff"/><rect x="12.2" y="20.4" width="11.5" height="4.900" fill="#939393"/><rect x="13.2" y="21.099999999999998" width="1.2" height="1" fill="#fff"/><rect x="15.0" y="21.099999999999998" width="1.2" height="1" fill="#fff"/><rect x="16.8" y="21.099999999999998" width="1.2" height="1" fill="#fff"/><rect x="18.6" y="21.099999999999998" width="1.2" height="1" fill="#fff"/><rect x="20.4" y="21.099999999999998" width="1.2" height="1" fill="#fff"/><rect x="13.2" y="22.9" width="9.5" height="1.500" fill="#fff"/><rect x="14.200" y="22.600" width="1.400" height="1.600" fill="#939393"/><rect x="12.2" y="26.4" width="7.6" height="4.900" fill="#939393"/><rect x="13.2" y="27.099999999999998" width="1.2" height="1" fill="#fff"/><rect x="15.0" y="27.099999999999998" width="1.2" height="1" fill="#fff"/><rect x="16.8" y="27.099999999999998" width="1.2" height="1" fill="#fff"/><rect x="13.2" y="28.9" width="5.6" height="1.500" fill="#fff"/><rect x="20.3" y="26.4" width="7.6" height="4.900" fill="#939393"/><rect x="21.3" y="27.099999999999998" width="1.2" height="1" fill="#fff"/><rect x="23.1" y="27.099999999999998" width="1.2" height="1" fill="#fff"/><rect x="24.9" y="27.099999999999998" width="1.2" height="1" fill="#fff"/><rect x="21.3" y="28.9" width="5.6" height="1.500" fill="#fff"/></svg><svg width="32" height="32" viewBox="0 0 32 32"><rect x="0.55" y="19.65" width="11.9" height="11.9" fill="url(#gOv)" stroke="#b2b2b2" stroke-width="0.9"/><path d="M4 21.100L10 21L9.900 27.200L7.900 25.800C6.800 26.600 5.900 28.200 5.700 31C4.200 29.800 2.900 28.600 2.800 27C2.900 25 3.800 23.600 5.200 22.600Z" fill="url(#gArr)"/></svg></div>
<div class="ic" style="top:874px"><svg width="32" height="32" viewBox="0 0 32 32"><path d="M24.500 24H30L25.500 30Z" fill="#b0b0b0" opacity="0.700"/><path d="M6 1L23 2.200Q25 2.400 25 4.400V31L7 28.500Z" fill="#5b6fae"/><path d="M5 1.500L22 2.500Q23.600 2.700 23.600 4.300V30L5.800 27.600Z" fill="url(#gNote)"/><path d="M8 5.500L23 6.500M8 8.500L23 9.500M8 11.500L23 12.500M8 14.500L23 15.500M8 17.500L23 18.500M8 20.500L23 21.500M8 23.500L23 24.500" stroke="#8c9fc8" stroke-width="0.500"/><path d="M9.300 2V28.300" stroke="#6f82b8" stroke-width="0.800"/><g fill="none" stroke="#7a828c" stroke-width="0.900"><ellipse cx="5.300" cy="4.500" rx="1.600" ry="0.900"/><ellipse cx="5.300" cy="7.500" rx="1.600" ry="0.900"/><ellipse cx="5.300" cy="10.500" rx="1.600" ry="0.900"/><ellipse cx="5.300" cy="13.500" rx="1.600" ry="0.900"/><ellipse cx="5.300" cy="16.500" rx="1.600" ry="0.900"/></g><path d="M17 7.300L21.300 15H12.700Z" fill="#f5d21a" stroke="#d8b000" stroke-width="0.700" stroke-linejoin="round"/><path d="M17 10V12.600M17 13.400V14.200" stroke="#111" stroke-width="1.100"/><circle cx="15.600" cy="22" r="4" fill="#d92a2a"/><circle cx="15.600" cy="22" r="3.900" fill="none" stroke="#f08080" stroke-width="0.500"/><path d="M13.700 20.100L17.500 23.900M17.500 20.100L13.700 23.900" stroke="#fff" stroke-width="1.300"/></svg><svg width="32" height="32" viewBox="0 0 32 32"><rect x="0.55" y="19.65" width="11.9" height="11.9" fill="url(#gOv)" stroke="#b2b2b2" stroke-width="0.9"/><path d="M4 21.100L10 21L9.900 27.200L7.900 25.800C6.800 26.600 5.900 28.200 5.700 31C4.200 29.800 2.900 28.600 2.800 27C2.900 25 3.800 23.600 5.200 22.600Z" fill="url(#gArr)"/></svg></div>
<div class="ic" style="top:916px"><svg width="32" height="32" viewBox="0 0 32 32"><path d="M5.500 1.500Q5.500 0.300 7 0.300H28Q30.500 0.300 30.500 2.500Q30.500 4.300 28.500 4.300H27.500V28.800H5.500Z" fill="url(#gScroll)" stroke="#e2d6a6" stroke-width="0.500"/><path d="M27 0.500Q30.300 0.500 30.300 2.500Q30.300 4.200 28.500 4.200H27Z" fill="#e8cf6a"/><path d="M9.200 6.500H21.800M9.200 9.500H21.800M9.200 12.500H21.800M9.200 15.400H21.800" stroke="#a9a2c6" stroke-width="1.100"/><path d="M12.500 28.600H18V29.800H12.500Z" fill="#ecd35c"/><g transform="translate(11.05,16.4) scale(0.89,0.8)"><path d="M0.500 6.500Q0.500 4.800 2 4.500L9.500 3L22 5Q23.500 5.300 23.500 7L12 10Z" fill="#c4d0d6"/><path d="M0.500 6.500L12 10V18.500L1.500 15.500Q0.500 15.200 0.500 14Z" fill="url(#gSteel)"/><path d="M12 10L23.500 7V14.500Q23.500 15.500 22.500 15.800L12 18.500Z" fill="url(#gSteelD)"/><path d="M0.500 9.500L12 13L23.500 10" stroke="#4f5d66" stroke-width="0.700" fill="none"/><path d="M6 4.300C7.500 0.500 15 0.800 16 5" stroke="#1e1e1e" stroke-width="1.200" fill="none"/><rect x="5" y="9.800" width="1.400" height="2.400" fill="#eef2f4"/><rect x="13.800" y="10.800" width="1.400" height="2.400" fill="#eef2f4"/></g></svg><svg width="32" height="32" viewBox="0 0 32 32"><rect x="0.55" y="19.65" width="11.9" height="11.9" fill="url(#gOv)" stroke="#b2b2b2" stroke-width="0.9"/><path d="M4 21.100L10 21L9.900 27.200L7.900 25.800C6.800 26.600 5.900 28.200 5.700 31C4.200 29.800 2.900 28.600 2.800 27C2.900 25 3.800 23.600 5.200 22.600Z" fill="url(#gArr)"/></svg></div>
<div class="ic" style="top:958px"><svg width="32" height="32" viewBox="0 0 32 32"><ellipse cx="17" cy="29.500" rx="9" ry="1.800" fill="#c9d3dc" opacity="0.800"/><circle cx="12" cy="12.300" r="12" fill="url(#gGlobe)"/><path d="M2 7C4 3 9 0.800 12 1.500C14 3.500 12 6 9 6.500C8 9 5.500 10.500 3.500 13C2 12 1 9 2 7Z" fill="#3fc83a"/><path d="M6 3C8 1.800 10.500 1.800 11.500 2.500C10 4 8 4.500 6 3Z" fill="#e8f0a0" opacity="0.700"/><path d="M20 5C22.500 7 24 10 23.800 13.500C22 13 20.500 11 20.500 9C19 8 19 6 20 5Z" fill="#3fc83a"/><path d="M5 17C7 15.500 10 16.500 11 18.500C10.500 21 8 22 6 21C4.500 20 4.300 18.300 5 17Z" fill="#2aa82a"/><path d="M22.500 19.500C29 21 31 25 27 27.500C24 29.300 19 29.500 16 28.800" stroke="#a9bccb" stroke-width="2.600" fill="none"/><path d="M22.500 19.500C29 21 31 25 27 27.500C24 29.300 19 29.500 16 28.800" stroke="#dfe8ef" stroke-width="1" fill="none"/><path d="M11.500 15L20 13L24.500 15.200V20L16 23L11.500 20.500Z" fill="#b6bec6"/><path d="M11.500 15L20 13L24.500 15.200L16 17.600Z" fill="#e4e8ec"/><path d="M16 17.600L24.500 15.200V20L16 23Z" fill="#8e98a2"/><path d="M13 17.500L15 18.500V21L13 20Z" fill="#dfe4e8"/></svg><svg width="32" height="32" viewBox="0 0 32 32"><rect x="0.55" y="19.65" width="11.9" height="11.9" fill="url(#gOv)" stroke="#b2b2b2" stroke-width="0.9"/><path d="M4 21.100L10 21L9.900 27.200L7.900 25.800C6.800 26.600 5.900 28.200 5.700 31C4.200 29.800 2.900 28.600 2.800 27C2.900 25 3.800 23.600 5.200 22.600Z" fill="url(#gArr)"/></svg></div>
<div class="ic" style="top:1000px"><svg width="32" height="32" viewBox="0 0 32 32"><path d="M13.500 0.300H24V24L13.500 30.500Z" fill="url(#gSrvS)"/><path d="M5.300 0.300H13.500V30.500H5.300Z" fill="url(#gSrvF)"/><path d="M6 1.500H12.800V2.700H6ZM6 5H12.800V6.200H6ZM6 8.500H12.800V9.700H6Z" fill="#697177"/><path d="M6 11.500H12.800V15.500H6Z" fill="#c6dce6"/><path d="M6 16.800H12.800V18H6Z" fill="#7b8389"/><path d="M13.500 26H20L13.500 31Z" fill="#8a8a8a" opacity="0.600"/><path d="M21.500 23V19.800Q21.500 16.300 24.700 16.300Q27.900 16.300 27.900 19.800V23" stroke="#e0ac28" stroke-width="2.200" fill="none"/><path d="M21.500 23V19.800Q21.500 16.300 24.700 16.300" stroke="#f8e088" stroke-width="0.800" fill="none"/><rect x="18.200" y="22" width="13.300" height="9.600" rx="0.800" fill="url(#gLock)"/><path d="M18.200 24.400H31.500M18.200 26.800H31.500M18.200 29.200H31.500" stroke="#a87808" stroke-width="0.700"/></svg><svg width="32" height="32" viewBox="0 0 32 32"><rect x="0.55" y="19.65" width="11.9" height="11.9" fill="url(#gOv)" stroke="#b2b2b2" stroke-width="0.9"/><path d="M4 21.100L10 21L9.900 27.200L7.900 25.800C6.800 26.600 5.900 28.200 5.700 31C4.200 29.800 2.900 28.600 2.800 27C2.900 25 3.800 23.600 5.200 22.600Z" fill="url(#gArr)"/></svg></div>
<div class="ic" style="top:1042px"><svg width="32" height="32" viewBox="0 0 32 32"><g fill="#1297d8"><circle cx="8" cy="17" r="6.800"/><circle cx="11" cy="11" r="5"/><circle cx="19.500" cy="10.500" r="6.400"/><circle cx="25.500" cy="15.500" r="5.300"/><circle cx="20" cy="20.500" r="5.500"/><circle cx="13.500" cy="23" r="5.200"/><circle cx="16" cy="16" r="7"/></g><rect x="19.50" y="8.90" width="2" height="4.40" fill="#fff" transform="rotate(0.0 20.5 13.3)"/><rect x="19.50" y="8.90" width="2" height="4.40" fill="#fff" transform="rotate(45.0 20.5 13.3)"/><rect x="19.50" y="8.90" width="2" height="4.40" fill="#fff" transform="rotate(90.0 20.5 13.3)"/><rect x="19.50" y="8.90" width="2" height="4.40" fill="#fff" transform="rotate(135.0 20.5 13.3)"/><rect x="19.50" y="8.90" width="2" height="4.40" fill="#fff" transform="rotate(180.0 20.5 13.3)"/><rect x="19.50" y="8.90" width="2" height="4.40" fill="#fff" transform="rotate(225.0 20.5 13.3)"/><rect x="19.50" y="8.90" width="2" height="4.40" fill="#fff" transform="rotate(270.0 20.5 13.3)"/><rect x="19.50" y="8.90" width="2" height="4.40" fill="#fff" transform="rotate(315.0 20.5 13.3)"/><circle cx="20.5" cy="13.3" r="3.26" fill="#fff"/><circle cx="20.5" cy="13.3" r="1.5" fill="#1297d8"/><rect x="11.00" y="15.00" width="2" height="4.00" fill="#fff" transform="rotate(0.0 12 19)"/><rect x="11.00" y="15.00" width="2" height="4.00" fill="#fff" transform="rotate(45.0 12 19)"/><rect x="11.00" y="15.00" width="2" height="4.00" fill="#fff" transform="rotate(90.0 12 19)"/><rect x="11.00" y="15.00" width="2" height="4.00" fill="#fff" transform="rotate(135.0 12 19)"/><rect x="11.00" y="15.00" width="2" height="4.00" fill="#fff" transform="rotate(180.0 12 19)"/><rect x="11.00" y="15.00" width="2" height="4.00" fill="#fff" transform="rotate(225.0 12 19)"/><rect x="11.00" y="15.00" width="2" height="4.00" fill="#fff" transform="rotate(270.0 12 19)"/><rect x="11.00" y="15.00" width="2" height="4.00" fill="#fff" transform="rotate(315.0 12 19)"/><circle cx="12" cy="19" r="2.96" fill="#fff"/><circle cx="12" cy="19" r="1.4" fill="#1297d8"/></svg><svg width="32" height="32" viewBox="0 0 32 32"><rect x="0.55" y="19.65" width="11.9" height="11.9" fill="url(#gOv)" stroke="#b2b2b2" stroke-width="0.9"/><path d="M4 21.100L10 21L9.900 27.200L7.900 25.800C6.800 26.600 5.900 28.200 5.700 31C4.200 29.800 2.900 28.600 2.800 27C2.900 25 3.800 23.600 5.200 22.600Z" fill="url(#gArr)"/></svg></div>
<div class="ic" style="top:1084px"><svg width="32" height="32" viewBox="0 0 32 32"><g transform="translate(0,0)"><path d="M30 2V23L31.500 21V3Z" fill="#c9c9c9" opacity="0.600"/><rect x="2.200" y="0.200" width="28.600" height="22" fill="#fdfdfd" stroke="#c6c9cf" stroke-width="0.500"/><rect x="2.200" y="0.200" width="28.600" height="4" fill="url(#gTabH)"/><path d="M2.200 4.200H30.800" stroke="#9ab0dc" stroke-width="0.700"/><path d="M5 7.800H29M5 10.600H29M5 13.400H29M5 16.200H29" stroke="#b4b4b4" stroke-width="0.900" stroke-dasharray="3.600 2.400"/></g><g transform="translate(-0.27,11.3) scale(1.14,1.09)"><path d="M0.500 6.500Q0.500 4.800 2 4.500L9.500 3L22 5Q23.500 5.300 23.500 7L12 10Z" fill="#c4d0d6"/><path d="M0.500 6.500L12 10V18.500L1.500 15.500Q0.500 15.200 0.500 14Z" fill="url(#gSteel)"/><path d="M12 10L23.500 7V14.500Q23.500 15.500 22.500 15.800L12 18.500Z" fill="url(#gSteelD)"/><path d="M0.500 9.500L12 13L23.500 10" stroke="#4f5d66" stroke-width="0.700" fill="none"/><path d="M6 4.300C7.500 0.500 15 0.800 16 5" stroke="#1e1e1e" stroke-width="1.200" fill="none"/><rect x="5" y="9.800" width="1.400" height="2.400" fill="#eef2f4"/><rect x="13.800" y="10.800" width="1.400" height="2.400" fill="#eef2f4"/></g></svg><svg width="32" height="32" viewBox="0 0 32 32"><rect x="0.55" y="19.65" width="11.9" height="11.9" fill="url(#gOv)" stroke="#b2b2b2" stroke-width="0.9"/><path d="M4 21.100L10 21L9.900 27.200L7.900 25.800C6.800 26.600 5.900 28.200 5.700 31C4.200 29.800 2.900 28.600 2.800 27C2.900 25 3.800 23.600 5.200 22.600Z" fill="url(#gArr)"/></svg></div>
<div class="ic" style="top:1126px"><svg width="32" height="32" viewBox="0 0 32 32"><g transform="translate(0,0)"><path d="M30 2V23L31.500 21V3Z" fill="#c9c9c9" opacity="0.600"/><rect x="2.200" y="0.200" width="28.600" height="22" fill="#fdfdfd" stroke="#c6c9cf" stroke-width="0.500"/><rect x="2.200" y="0.200" width="28.600" height="4" fill="url(#gTabH)"/><path d="M2.200 4.200H30.800" stroke="#9ab0dc" stroke-width="0.700"/><path d="M5 7.800H29M5 10.600H29M5 13.400H29M5 16.200H29" stroke="#b4b4b4" stroke-width="0.900" stroke-dasharray="3.600 2.400"/></g><g transform="translate(-0.27,11.3) scale(1.14,1.09)"><path d="M0.500 6.500Q0.500 4.800 2 4.500L9.500 3L22 5Q23.500 5.300 23.500 7L12 10Z" fill="#c4d0d6"/><path d="M0.500 6.500L12 10V18.500L1.500 15.500Q0.500 15.200 0.500 14Z" fill="url(#gSteel)"/><path d="M12 10L23.500 7V14.500Q23.500 15.500 22.500 15.800L12 18.500Z" fill="url(#gSteelD)"/><path d="M0.500 9.500L12 13L23.500 10" stroke="#4f5d66" stroke-width="0.700" fill="none"/><path d="M6 4.300C7.500 0.500 15 0.800 16 5" stroke="#1e1e1e" stroke-width="1.200" fill="none"/><rect x="5" y="9.800" width="1.400" height="2.400" fill="#eef2f4"/><rect x="13.800" y="10.800" width="1.400" height="2.400" fill="#eef2f4"/></g></svg><svg width="32" height="32" viewBox="0 0 32 32"><rect x="0.55" y="19.65" width="11.9" height="11.9" fill="url(#gOv)" stroke="#b2b2b2" stroke-width="0.9"/><path d="M4 21.100L10 21L9.900 27.200L7.900 25.800C6.800 26.600 5.900 28.200 5.700 31C4.200 29.800 2.900 28.600 2.800 27C2.900 25 3.800 23.600 5.200 22.600Z" fill="url(#gArr)"/></svg></div>
<div class="ic" style="top:1168px"><svg width="32" height="32" viewBox="0 0 32 32"><circle cx="16.200" cy="15.600" r="15.300" fill="url(#gGauge)"/><circle cx="16.200" cy="15.600" r="14.300" fill="none" stroke="url(#gRim)" stroke-width="2.200"/><circle cx="16.200" cy="15.600" r="12.600" fill="none" stroke="#fff" stroke-width="1.400" opacity="0.800"/><path d="M8.500 20A9 9 0 0 1 12 7.500" stroke="#d9d9d6" stroke-width="1.800" fill="none" stroke-dasharray="1.500 1"/><path d="M12.500 7.200A9.500 9.500 0 0 1 22.500 9" stroke="#cfcfcc" stroke-width="1.500" fill="none" stroke-dasharray="1.300 1"/><path d="M23.800 11A9.500 9.500 0 0 1 22.300 21.500" stroke="#ef8a1c" stroke-width="2" fill="none" stroke-dasharray="1.800 0.800"/><path d="M8.400 5.600L10.200 4.800L18 18L16.300 19.800Z" fill="#d8161c"/></svg><svg width="32" height="32" viewBox="0 0 32 32"><rect x="0.55" y="19.65" width="11.9" height="11.9" fill="url(#gOv)" stroke="#b2b2b2" stroke-width="0.9"/><path d="M4 21.100L10 21L9.900 27.200L7.900 25.800C6.800 26.600 5.900 28.200 5.700 31C4.200 29.800 2.900 28.600 2.800 27C2.900 25 3.800 23.600 5.200 22.600Z" fill="url(#gArr)"/></svg></div>
<div class="ic" style="top:1210px"><svg width="32" height="32" viewBox="0 0 32 32"><path d="M3.500 2.500C5 0.800 8 0.800 9.500 2L6.500 4.500L7.500 6.500L10.500 4.500C11.500 6.500 10.500 9 8 10L8.500 12H3.500L4 9.500C1.500 8 1.500 4.500 3.500 2.500Z" fill="#d4d8da" stroke="#9aa0a4" stroke-width="0.500"/><rect x="3.500" y="11" width="5" height="1" fill="#d89a20"/><path d="M21 8.500H31L29.500 12H19.500Z" fill="#f0f0f0" stroke="#d0d0d0" stroke-width="0.500"/></svg><svg width="32" height="32" viewBox="0 0 32 32"><rect x="0.55" y="19.65" width="11.9" height="11.9" fill="url(#gOv)" stroke="#b2b2b2" stroke-width="0.9"/><path d="M4 21.100L10 21L9.900 27.200L7.900 25.800C6.800 26.600 5.900 28.200 5.700 31C4.200 29.800 2.900 28.600 2.800 27C2.900 25 3.800 23.600 5.200 22.600Z" fill="url(#gArr)"/></svg></div>
<span class="t" style="left:78.0px;top:248px;font-size:23px;color:#000;transform:scaleX(1.0133)">Terminal Services</span>
<span class="t" style="left:557.5px;top:248px;font-size:23px;color:#686868;transform:scaleX(1.0611)">9/15/2018 3:19 AM</span>
<span class="t" style="left:796.4px;top:248px;font-size:23px;color:#686868;transform:scaleX(1.0768)">File folder</span>
<span class="t" style="left:78.0px;top:290px;font-size:23px;color:#000;transform:scaleX(1.0544)">Active Directory Administrative Center</span>
<span class="t" style="left:557.5px;top:290px;font-size:23px;color:#686868;transform:scaleX(1.0611)">9/15/2018 3:13 AM</span>
<span class="t" style="left:797.6px;top:290px;font-size:23px;color:#686868;transform:scaleX(1.0459)">Shortcut</span>
<span class="t" style="left:1121.7px;top:290px;font-size:23px;color:#686868;transform:scaleX(0.9646)">2 KB</span>
<span class="t" style="left:78.0px;top:332px;font-size:23px;color:#000;transform:scaleX(1.0364)">Active Directory Domains and Trusts</span>
<span class="t" style="left:557.5px;top:332px;font-size:23px;color:#686868;transform:scaleX(1.0611)">9/15/2018 3:14 AM</span>
<span class="t" style="left:797.6px;top:332px;font-size:23px;color:#686868;transform:scaleX(1.0459)">Shortcut</span>
<span class="t" style="left:1121.7px;top:332px;font-size:23px;color:#686868;transform:scaleX(0.9646)">2 KB</span>
<span class="t" style="left:78.0px;top:374px;font-size:23px;color:#000;transform:scaleX(1.0444)">Active Directory Module for Windows Po...</span>
<span class="t" style="left:557.5px;top:374px;font-size:23px;color:#686868;transform:scaleX(1.0611)">9/15/2018 3:13 AM</span>
<span class="t" style="left:797.6px;top:374px;font-size:23px;color:#686868;transform:scaleX(1.0459)">Shortcut</span>
<span class="t" style="left:1121.7px;top:374px;font-size:23px;color:#686868;transform:scaleX(0.9646)">2 KB</span>
<span class="t" style="left:78.0px;top:416px;font-size:23px;color:#000;transform:scaleX(1.0235)">Active Directory Sites and Services</span>
<span class="t" style="left:557.5px;top:416px;font-size:23px;color:#686868;transform:scaleX(1.0611)">9/15/2018 3:13 AM</span>
<span class="t" style="left:797.6px;top:416px;font-size:23px;color:#686868;transform:scaleX(1.0459)">Shortcut</span>
<span class="t" style="left:1121.7px;top:416px;font-size:23px;color:#686868;transform:scaleX(0.9646)">2 KB</span>
<span class="t" style="left:78.0px;top:458px;font-size:23px;color:#000;transform:scaleX(1.0338)">Active Directory Users and Computers</span>
<span class="t" style="left:557.5px;top:458px;font-size:23px;color:#686868;transform:scaleX(1.0611)">9/15/2018 3:14 AM</span>
<span class="t" style="left:797.6px;top:458px;font-size:23px;color:#686868;transform:scaleX(1.0459)">Shortcut</span>
<span class="t" style="left:1121.7px;top:458px;font-size:23px;color:#686868;transform:scaleX(0.9646)">2 KB</span>
<span class="t" style="left:78.0px;top:500px;font-size:23px;color:#000;transform:scaleX(0.9720)">ADSI Edit</span>
<span class="t" style="left:557.5px;top:500px;font-size:23px;color:#686868;transform:scaleX(1.0611)">9/15/2018 3:13 AM</span>
<span class="t" style="left:797.6px;top:500px;font-size:23px;color:#686868;transform:scaleX(1.0459)">Shortcut</span>
<span class="t" style="left:1121.7px;top:500px;font-size:23px;color:#686868;transform:scaleX(0.9646)">2 KB</span>
<span class="t" style="left:78.0px;top:542px;font-size:23px;color:#000;transform:scaleX(1.0802)">Certification Authority</span>
<span class="t" style="left:557.5px;top:542px;font-size:23px;color:#686868;transform:scaleX(1.0611)">9/15/2018 3:13 AM</span>
<span class="t" style="left:797.6px;top:542px;font-size:23px;color:#686868;transform:scaleX(1.0459)">Shortcut</span>
<span class="t" style="left:1121.7px;top:542px;font-size:23px;color:#686868;transform:scaleX(0.9646)">2 KB</span>
<span class="t" style="left:78.0px;top:584px;font-size:23px;color:#000;transform:scaleX(1.0300)">Component Services</span>
<span class="t" style="left:557.5px;top:584px;font-size:23px;color:#686868;transform:scaleX(1.0611)">9/15/2018 3:12 AM</span>
<span class="t" style="left:797.6px;top:584px;font-size:23px;color:#686868;transform:scaleX(1.0459)">Shortcut</span>
<span class="t" style="left:1121.7px;top:584px;font-size:23px;color:#686868;transform:scaleX(0.9646)">2 KB</span>
<span class="t" style="left:78.0px;top:626px;font-size:23px;color:#000;transform:scaleX(1.0603)">Computer Management</span>
<span class="t" style="left:557.5px;top:626px;font-size:23px;color:#686868;transform:scaleX(1.0611)">9/15/2018 3:12 AM</span>
<span class="t" style="left:797.6px;top:626px;font-size:23px;color:#686868;transform:scaleX(1.0459)">Shortcut</span>
<span class="t" style="left:1121.7px;top:626px;font-size:23px;color:#686868;transform:scaleX(0.9646)">2 KB</span>
<span class="t" style="left:78.0px;top:668px;font-size:23px;color:#000;transform:scaleX(1.0556)">Defragment and Optimize Drives</span>
<span class="t" style="left:557.5px;top:668px;font-size:23px;color:#686868;transform:scaleX(1.0611)">9/15/2018 3:12 AM</span>
<span class="t" style="left:797.6px;top:668px;font-size:23px;color:#686868;transform:scaleX(1.0459)">Shortcut</span>
<span class="t" style="left:1121.7px;top:668px;font-size:23px;color:#686868;transform:scaleX(0.9646)">2 KB</span>
<span class="t" style="left:78.0px;top:710px;font-size:23px;color:#000;transform:scaleX(1.0337);-webkit-text-stroke-color:#cce8ff">Dell EMC NAS Management</span>
<span class="t" style="left:557.5px;top:710px;font-size:23px;color:#686868;transform:scaleX(1.0611);-webkit-text-stroke-color:#cce8ff">8/29/2025 8:15 AM</span>
<span class="t" style="left:797.6px;top:710px;font-size:23px;color:#686868;transform:scaleX(1.0459);-webkit-text-stroke-color:#cce8ff">Shortcut</span>
<span class="t" style="left:1121.7px;top:710px;font-size:23px;color:#686868;transform:scaleX(0.9646);-webkit-text-stroke-color:#cce8ff">2 KB</span>
<span class="t" style="left:78.0px;top:752px;font-size:23px;color:#000;transform:scaleX(1.0251)">DFS Management</span>
<span class="t" style="left:557.5px;top:752px;font-size:23px;color:#686868;transform:scaleX(1.0611)">9/15/2018 3:13 AM</span>
<span class="t" style="left:797.6px;top:752px;font-size:23px;color:#686868;transform:scaleX(1.0459)">Shortcut</span>
<span class="t" style="left:1121.7px;top:752px;font-size:23px;color:#686868;transform:scaleX(0.9646)">2 KB</span>
<span class="t" style="left:78.0px;top:794px;font-size:23px;color:#000;transform:scaleX(1.0257)">Disk Cleanup</span>
<span class="t" style="left:557.5px;top:794px;font-size:23px;color:#686868;transform:scaleX(1.0611)">9/15/2018 3:12 AM</span>
<span class="t" style="left:797.6px;top:794px;font-size:23px;color:#686868;transform:scaleX(1.0459)">Shortcut</span>
<span class="t" style="left:1121.7px;top:794px;font-size:23px;color:#686868;transform:scaleX(0.9646)">2 KB</span>
<span class="t" style="left:78.0px;top:836px;font-size:23px;color:#000;transform:scaleX(0.9771)">DNS</span>
<span class="t" style="left:557.5px;top:836px;font-size:23px;color:#686868;transform:scaleX(1.0611)">9/15/2018 3:13 AM</span>
<span class="t" style="left:797.6px;top:836px;font-size:23px;color:#686868;transform:scaleX(1.0459)">Shortcut</span>
<span class="t" style="left:1121.7px;top:836px;font-size:23px;color:#686868;transform:scaleX(0.9646)">2 KB</span>
<span class="t" style="left:78.0px;top:878px;font-size:23px;color:#000;transform:scaleX(1.0222)">Event Viewer</span>
<span class="t" style="left:557.5px;top:878px;font-size:23px;color:#686868;transform:scaleX(1.0611)">9/15/2018 3:12 AM</span>
<span class="t" style="left:797.6px;top:878px;font-size:23px;color:#686868;transform:scaleX(1.0459)">Shortcut</span>
<span class="t" style="left:1121.7px;top:878px;font-size:23px;color:#686868;transform:scaleX(0.9646)">2 KB</span>
<span class="t" style="left:78.0px;top:920px;font-size:23px;color:#000;transform:scaleX(1.0441)">Group Policy Management</span>
<span class="t" style="left:557.5px;top:920px;font-size:23px;color:#686868;transform:scaleX(1.0611)">9/15/2018 3:13 AM</span>
<span class="t" style="left:797.6px;top:920px;font-size:23px;color:#686868;transform:scaleX(1.0459)">Shortcut</span>
<span class="t" style="left:1121.7px;top:920px;font-size:23px;color:#686868;transform:scaleX(0.9646)">2 KB</span>
<span class="t" style="left:78.0px;top:962px;font-size:23px;color:#000;transform:scaleX(1.0057)">iSCSI Initiator</span>
<span class="t" style="left:557.5px;top:962px;font-size:23px;color:#686868;transform:scaleX(1.0611)">9/15/2018 3:12 AM</span>
<span class="t" style="left:797.6px;top:962px;font-size:23px;color:#686868;transform:scaleX(1.0459)">Shortcut</span>
<span class="t" style="left:1121.7px;top:962px;font-size:23px;color:#686868;transform:scaleX(0.9646)">2 KB</span>
<span class="t" style="left:78.0px;top:1004px;font-size:23px;color:#000;transform:scaleX(1.0066)">Local Security Policy</span>
<span class="t" style="left:557.5px;top:1004px;font-size:23px;color:#686868;transform:scaleX(1.0611)">9/15/2018 3:13 AM</span>
<span class="t" style="left:797.6px;top:1004px;font-size:23px;color:#686868;transform:scaleX(1.0459)">Shortcut</span>
<span class="t" style="left:1121.7px;top:1004px;font-size:23px;color:#686868;transform:scaleX(0.9646)">2 KB</span>
<span class="t" style="left:78.0px;top:1046px;font-size:23px;color:#000;transform:scaleX(1.0373)">Microsoft Azure Services</span>
<span class="t" style="left:557.5px;top:1046px;font-size:23px;color:#686868;transform:scaleX(1.0611)">9/15/2018 3:13 AM</span>
<span class="t" style="left:797.6px;top:1046px;font-size:23px;color:#686868;transform:scaleX(1.0459)">Shortcut</span>
<span class="t" style="left:1121.7px;top:1046px;font-size:23px;color:#686868;transform:scaleX(0.9646)">2 KB</span>
<span class="t" style="left:78.0px;top:1088px;font-size:23px;color:#000;transform:scaleX(1.0152)">ODBC Data Sources (32-bit)</span>
<span class="t" style="left:557.5px;top:1088px;font-size:23px;color:#686868;transform:scaleX(1.0611)">9/15/2018 3:12 AM</span>
<span class="t" style="left:797.6px;top:1088px;font-size:23px;color:#686868;transform:scaleX(1.0459)">Shortcut</span>
<span class="t" style="left:1121.7px;top:1088px;font-size:23px;color:#686868;transform:scaleX(0.9646)">2 KB</span>
<span class="t" style="left:78.0px;top:1130px;font-size:23px;color:#000;transform:scaleX(1.0152)">ODBC Data Sources (64-bit)</span>
<span class="t" style="left:557.5px;top:1130px;font-size:23px;color:#686868;transform:scaleX(1.0611)">9/15/2018 3:12 AM</span>
<span class="t" style="left:797.6px;top:1130px;font-size:23px;color:#686868;transform:scaleX(1.0459)">Shortcut</span>
<span class="t" style="left:1121.7px;top:1130px;font-size:23px;color:#686868;transform:scaleX(0.9646)">2 KB</span>
<span class="t" style="left:78.0px;top:1172px;font-size:23px;color:#000;transform:scaleX(1.0558)">Performance Monitor</span>
<span class="t" style="left:557.5px;top:1172px;font-size:23px;color:#686868;transform:scaleX(1.0611)">9/15/2018 3:12 AM</span>
<span class="t" style="left:797.6px;top:1172px;font-size:23px;color:#686868;transform:scaleX(1.0459)">Shortcut</span>
<span class="t" style="left:1121.7px;top:1172px;font-size:23px;color:#686868;transform:scaleX(0.9646)">2 KB</span>
<span class="t" style="left:78.0px;top:1214px;font-size:23px;color:#000;transform:scaleX(1.0532)">Print Management</span>
<span class="t" style="left:557.5px;top:1214px;font-size:23px;color:#686868;transform:scaleX(1.0611)">9/15/2018 3:12 AM</span>
<span class="t" style="left:797.6px;top:1214px;font-size:23px;color:#686868;transform:scaleX(1.0459)">Shortcut</span>
<span class="t" style="left:1121.7px;top:1214px;font-size:23px;color:#686868;transform:scaleX(0.9646)">2 KB</span>
</div>
<!-- scrollbar -->
<div class="a" style="left:1458px;top:175px;width:33px;height:1048px;background:#f0f0f0"></div>
<div class="a" style="left:1458px;top:209px;width:32px;height:655px;background:#cdcdcd"></div>
<svg class="a" style="left:1458px;top:175px" width="33" height="34" viewBox="0 0 33 34"><path d="M10.900 19.500L16.450 13.800L22.100 19.500V23L16.450 17.800L10.900 23Z" fill="#606060"/></svg>
<svg class="a" style="left:1458px;top:1189px" width="33" height="34" viewBox="0 0 33 34"><path d="M10.800 12.900L16.450 18.300L22.300 12.900V16.500L16.450 21.900L10.800 16.500Z" fill="#606060"/></svg>
<!-- status bar -->
<div class="a" style="left:141px;top:1235px;width:2px;height:22px;background:#f0f0f0"></div>
<div class="a" style="left:439px;top:1235px;width:2px;height:22px;background:#f0f0f0"></div>
<div class="a" style="left:1395px;top:1223px;width:42px;height:44px;background:#cce8f5;border:1px solid #26a0da"></div>
<svg class="a" style="left:1395px;top:1223px" width="98" height="48" viewBox="0 0 98 48">
 <rect x="10.5" y="12.500" width="5" height="25" fill="#fff" stroke="#8a8a8a" stroke-width="1"/>
 <g stroke="#7a7a7a" stroke-width="1.2"><path d="M17 14.5H26M28 14.5H37M17 19.5H26M28 19.5H37M17 24.5H26M28 24.5H37M17 29.5H26M28 29.5H37M17 34.500H26M28 34.500H37"/></g>
 <g><rect x="12" y="14" width="2" height="2" fill="#2a6fb0"/><rect x="12" y="19" width="2" height="2" fill="#c87020"/><rect x="12" y="24" width="2" height="2" fill="#c01010"/><rect x="12" y="29" width="2" height="2" fill="#70a040"/><rect x="12" y="34" width="2" height="2" fill="#2a6fb0"/></g>
 <defs><linearGradient id="sky" x1="0" y1="0" x2="0" y2="1"><stop offset="0" stop-color="#5494ee"/><stop offset="0.450" stop-color="#a9cdf6"/><stop offset="1" stop-color="#eef5fc"/></linearGradient>
 <linearGradient id="water" x1="0" y1="0" x2="1" y2="1"><stop offset="0" stop-color="#2f62a6"/><stop offset="1" stop-color="#a9c0d8"/></linearGradient>
 <linearGradient id="hill" x1="0" y1="0" x2="1" y2="0"><stop offset="0" stop-color="#2f5a3c"/><stop offset="1" stop-color="#5c8a6a"/></linearGradient></defs>
 <rect x="52.500" y="12.500" width="27" height="20" fill="#fff" stroke="#a2a2a2" stroke-width="1"/>
 <rect x="54" y="14" width="24" height="17" fill="url(#sky)"/>
 <path d="M54 19.500C57 19 60 19.800 62 20.500C66 19.500 72 20.500 78 22V27H54Z" fill="#e4effa" opacity="0.800"/>
 <path d="M54 20.300C57 19.800 60 21.300 63 23.300C67 25.300 73 26 78 26.300V27.500H54Z" fill="url(#hill)"/>
 <rect x="54" y="27" width="24" height="4" fill="url(#water)"/>
</svg>
<span class="t" style="left:638.1px;top:16px;font-size:23px;color:#000;transform:scaleX(1.0552)">Administrative Tools</span>
<span class="t" style="left:491.7px;top:22px;font-size:21.5px;color:#2b2b2b;transform:scaleX(0.9800);-webkit-text-stroke-color:#fccbb6">Manage</span>
<span class="t" style="left:41.1px;top:69px;font-size:21.5px;color:#fff;transform:scaleX(0.9406);-webkit-text-stroke-color:#005fab">File</span>
<span class="t" style="left:140.0px;top:69px;font-size:21.5px;color:#2b2b2b;transform:scaleX(0.9818)">Home</span>
<span class="t" style="left:252.3px;top:69px;font-size:21.5px;color:#2b2b2b;transform:scaleX(0.9143)">Share</span>
<span class="t" style="left:361.5px;top:69px;font-size:21.5px;color:#2b2b2b;transform:scaleX(0.9457)">View</span>
<span class="t" style="left:463.3px;top:69px;font-size:21.5px;color:#2b2b2b;transform:scaleX(0.9694)">Shortcut Tools</span>
<span class="t" style="left:284.9px;top:127px;font-size:23px;color:#000;transform:scaleX(1.0195)">System and Security</span>
<span class="t" style="left:539.5px;top:127px;font-size:23px;color:#000;transform:scaleX(1.0542)">Administrative Tools</span>
<span class="t" style="left:1086.1px;top:128px;font-size:23px;color:#686868;transform:scaleX(1.0404)">Search Administrative Tools</span>
<span class="t" style="left:35.7px;top:188px;font-size:23px;color:#4c607a;transform:scaleX(1.0552)">Name</span>
<span class="t" style="left:556.4px;top:188px;font-size:23px;color:#4c607a;transform:scaleX(1.0906)">Date modified</span>
<span class="t" style="left:798.6px;top:188px;font-size:23px;color:#4c607a;transform:scaleX(1.0082)">Type</span>
<span class="t" style="left:1037.7px;top:188px;font-size:23px;color:#4c607a;transform:scaleX(0.9605)">Size</span>
<span class="t" style="left:30.3px;top:1233px;font-size:23px;color:#1e3558;transform:scaleX(1.0471)">35 items</span>
<span class="t" style="left:162.7px;top:1233px;font-size:23px;color:#1e3558;transform:scaleX(1.0293)">1 item selected  1.00 KB</span>

</div>
</body></html>
